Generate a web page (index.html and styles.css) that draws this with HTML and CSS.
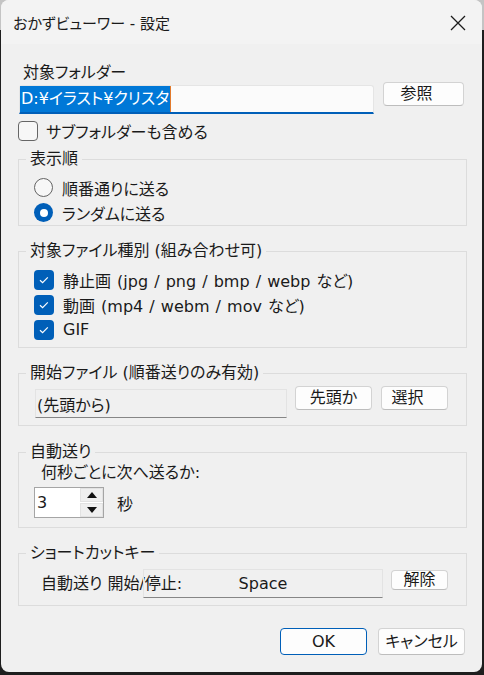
FILE: index.html
```html
<html lang="ja">
  <head>
    <meta charset="UTF-8" />
    <meta name="viewport" content="width=device-width, initial-scale=1.0" />
    <title>おかずビューワー - 設定</title>
    <link rel="stylesheet" href="styles.css">
  </head>
  <body>
    <div class="window">
      <header class="titlebar">
        <span class="title">おかずビューワー - 設定</span>
        <svg class="close" viewBox="0 0 16 16" width="16" height="16">
          <path d="M1 1L15 15M15 1L1 15" stroke="#1b1b1b" stroke-width="1.3" fill="none" />
        </svg>
      </header>

      <main class="content">
        <div class="field-label">対象フォルダー</div>
        <div class="folder-row">
          <div class="edit edit-focus">
            <span class="selection">D:¥イラスト¥クリスタ</span><span class="caret"></span>
          </div>
          <button class="btn btn-ref">参照</button>
        </div>
        <label class="check-row">
          <span class="check"></span>
          <span>サブフォルダーも含める</span>
        </label>

        <fieldset class="group g-order">
          <legend>表示順</legend>
          <div class="opt"><span class="radio"></span>順番通りに送る</div>
          <div class="opt"><span class="radio on"></span>ランダムに送る</div>
        </fieldset>

        <fieldset class="group g-types">
          <legend>対象ファイル種別 (組み合わせ可)</legend>
          <div class="opt">
            <span class="box"><svg viewBox="0 0 20 20" width="20" height="20"><path d="M6 10.2L8.6 12.6L13.8 7.4" stroke="#fff" stroke-width="1.2" fill="none" /></svg></span>静止画 (jpg / png / bmp / webp など)
          </div>
          <div class="opt">
            <span class="box"><svg viewBox="0 0 20 20" width="20" height="20"><path d="M6 10.2L8.6 12.6L13.8 7.4" stroke="#fff" stroke-width="1.2" fill="none" /></svg></span>動画 (mp4 / webm / mov など)
          </div>
          <div class="opt">
            <span class="box"><svg viewBox="0 0 20 20" width="20" height="20"><path d="M6 10.2L8.6 12.6L13.8 7.4" stroke="#fff" stroke-width="1.2" fill="none" /></svg></span>GIF
          </div>
        </fieldset>

        <fieldset class="group g-start">
          <legend>開始ファイル (順番送りのみ有効)</legend>
          <div class="start-row">
            <div class="edit edit-ro">(先頭から)</div>
            <button class="btn btn-head">先頭か</button>
            <button class="btn btn-select">選択</button>
          </div>
        </fieldset>

        <fieldset class="group g-auto">
          <legend>自動送り</legend>
          <div class="interval-label">何秒ごとに次へ送るか:</div>
          <div class="spin-row">
            <div class="spin">
              <span class="spin-val">3</span>
              <div class="spin-btns">
                <span class="spin-btn"><svg viewBox="0 0 10 6" width="10" height="6"><path d="M0 6L5 0L10 6Z" fill="#111" /></svg></span>
                <span class="spin-btn"><svg viewBox="0 0 10 6" width="10" height="6"><path d="M0 0L10 0L5 6Z" fill="#111" /></svg></span>
              </div>
            </div>
            <span class="unit">秒</span>
          </div>
        </fieldset>

        <fieldset class="group g-keys">
          <legend>ショートカットキー</legend>
          <div class="key-row">
            <span class="key-label">自動送り 開始/停止:</span>
            <div class="edit key-field">Space</div>
            <button class="btn btn-clear">解除</button>
          </div>
        </fieldset>

        <div class="actions">
          <button class="btn btn-ok">OK</button>
          <button class="btn btn-cancel">キャンセル</button>
        </div>
      </main>
    </div>
  </body>
</html>
```

FILE: styles.css
```css
*,
*::before,
*::after {
  box-sizing: border-box;
}
body {
  margin: 0;
  background: linear-gradient(#c4c4c4 0 30px, #1e1e1e 30px);
  font-family: "DejaVu Sans", "Noto Sans CJK JP", sans-serif;
  font-size: 16px;
  font-feature-settings: "palt";
  color: #1a1a1a;
}
button {
  font: inherit;
  color: inherit;
  cursor: pointer;
}
.window {
  margin-left: 1px;
  width: 481px;
  height: 672px;
  background: #f0f0f0;
  border-radius: 8px;
  overflow: hidden;
}
.titlebar {
  height: 44px;
  background: #f3f3f3;
  display: flex;
  align-items: center;
  padding: 1px 16px 0 12px;

  & .title {
    font-size: 15px;
  }
  & .close {
    margin-left: auto;
  }
}
.content {
  padding: 0 15px 0 17px;
}
.field-label {
  margin-top: 19px;
  padding-left: 5px;
  line-height: 20px;
}
.folder-row {
  display: flex;
  align-items: flex-start;
  margin-top: -1px;
}
.edit {
  height: 29px;
  display: flex;
  align-items: center;
  white-space: nowrap;
}
.edit-focus {
  margin-top: 3px;
  margin-left: 1px;
  width: 355px;
  background: #fbfbfb;
  border: 1px solid #e5e5e5;
  border-bottom: 2px solid #005fb8;
  border-radius: 3px 3px 0 0;
  padding-left: 0;

  & .selection {
    background: #0078d7;
    color: #fff;
    height: 26px;
    line-height: 26px;
    padding: 0 1px;
  }
  & .caret {
    width: 1px;
    height: 26px;
    background: #e27a2c;
  }
}
.btn {
  background: #fdfdfd;
  border: 1px solid #d3d3d3;
  border-bottom-color: #bdbdbd;
  border-radius: 4px;
  padding: 0;
  line-height: 20px;
  white-space: nowrap;
  overflow: hidden;
}
.btn-ref {
  margin-left: 9px;
  width: 81px;
  height: 24px;
  padding-right: 14px;
}
.check-row {
  display: flex;
  align-items: center;
  gap: 8px;
  height: 21px;
  margin-top: 6px;
}
.check {
  width: 20px;
  height: 20px;
  border: 1px solid #666;
  border-radius: 4px;
  background: #f7f7f7;
}
.group {
  margin: 15px 0 0;
  padding: 0 7px;
  border: 1px solid #dcdcdc;
  width: 449px;
  min-width: 0;

  & legend {
    padding: 0 4px;
    line-height: 20px;
  }
}
.opt {
  display: flex;
  align-items: center;
  gap: 9px;
  height: 25px;
  padding-left: 8px;
  white-space: nowrap;
  word-spacing: 1px;
}
.radio {
  width: 19px;
  height: 19px;
  flex-shrink: 0;
  border: 1px solid #636363;
  border-radius: 50%;
  background: #f7f7f7;

  &.on {
    border: 0;
    background: #005fb8;
    display: flex;
    align-items: center;
    justify-content: center;
  }
  &.on::after {
    content: "";
    width: 8px;
    height: 8px;
    border-radius: 50%;
    background: #fff;
  }
}
.box {
  width: 20px;
  height: 20px;
  flex-shrink: 0;
  border-radius: 4px;
  background: #005fb8;

  & svg {
    display: block;
  }
}
.g-order {
  margin-top: 8px;
  padding-top: 6px;
}
.g-types {
  padding-top: 6px;
  padding-bottom: 5px;
}
.g-start {
  padding-top: 3px;
  padding-bottom: 7px;
}
.start-row {
  display: flex;
  align-items: flex-start;
  padding-left: 8px;
}
.edit-ro,
.key-field {
  background: transparent;
  border: 1px solid #e3e3e3;
  border-bottom-color: #868686;
}
.edit-ro {
  margin-top: 3px;
  margin-left: 1px;
  width: 252px;
  padding-left: 1px;
}
.btn-head {
  margin-left: 8px;
  width: 77px;
  height: 24px;
}
.btn-select {
  margin-left: 9px;
  width: 67px;
  height: 24px;
  padding-right: 14px;
}
.g-auto {
  margin-top: 16px;
  padding-top: 1px;
  padding-bottom: 9px;
}
.interval-label {
  padding-left: 15px;
  line-height: 20px;
}
.spin-row {
  display: flex;
  align-items: center;
  margin-top: 4px;
  padding-left: 8px;
}
.spin {
  width: 70px;
  height: 31px;
  border: 1px solid #a5a5a5;
  background: #fff;
  display: flex;
}
.spin-val {
  flex: 1;
  padding-left: 2px;
  line-height: 29px;
}
.spin-btns {
  width: 23px;
  display: flex;
  flex-direction: column;
  gap: 1px;
  background: #fff;
}
.spin-btn {
  flex: 1;
  background: #efefef;
  border: 1px solid #e2e2e2;
  display: flex;
  align-items: center;
  justify-content: center;
}
.unit {
  margin-left: 13px;
}
.g-keys {
  padding-top: 6px;
  padding-bottom: 7px;
}
.key-row {
  display: flex;
  align-items: flex-start;
  padding-left: 15px;
}
.key-label {
  width: 102px;
  flex-shrink: 0;
  white-space: nowrap;
  line-height: 29px;
}
.key-field {
  width: 240px;
  justify-content: center;
}
.btn-clear {
  margin-left: 8px;
  margin-top: 1px;
  width: 57px;
  height: 20px;
  line-height: 18px;
}
.actions {
  display: flex;
  justify-content: flex-end;
  gap: 11px;
  margin-top: 22px;
  padding-right: 2px;

  & .btn {
    width: 87px;
    height: 27px;
  }
  & .btn-ok {
    border-color: #005fb8;
  }
}
```
